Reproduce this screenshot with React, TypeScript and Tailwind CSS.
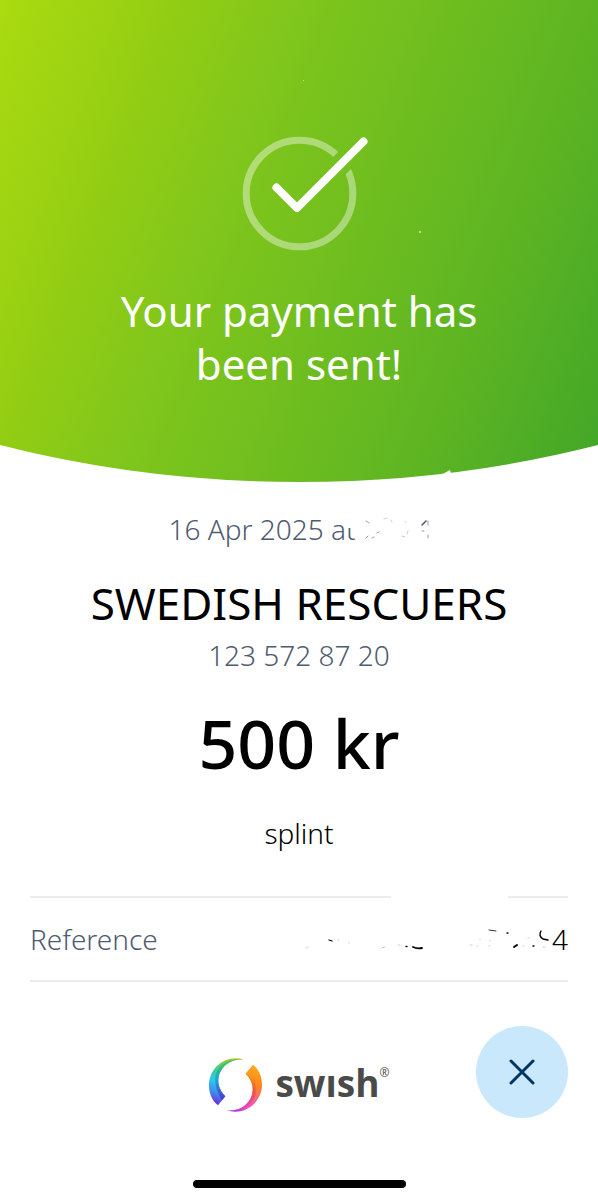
import { useState } from "react";

function CheckMark() {
  return (
    <svg width="140" height="116" viewBox="0 0 140 116" fill="none" aria-hidden="true">
      <mask id="ring-gap">
        <rect width="140" height="116" fill="#fff" />
        <path d="M68 72 L140 0" stroke="#000" strokeWidth="21" />
      </mask>
      <circle cx="70.5" cy="57.5" r="53.3" stroke="#fff" strokeOpacity="0.4" strokeWidth="7" mask="url(#ring-gap)" />
      <path d="M47.5 51.5 L68 72 L134.5 5.5" stroke="#fff" strokeWidth="8" strokeLinecap="round" strokeLinejoin="round" />
    </svg>
  );
}

function SwishMark() {
  return (
    <svg width="55" height="56" viewBox="0 0 165 168" aria-hidden="true">
      <defs>
        <linearGradient id="cool" x1="100" y1="0" x2="35" y2="145" gradientUnits="userSpaceOnUse">
          <stop offset="0" stopColor="#e6c41c" />
          <stop offset="0.2" stopColor="#8fc93a" />
          <stop offset="0.4" stopColor="#3fd08a" />
          <stop offset="0.62" stopColor="#2cc8ee" />
          <stop offset="0.82" stopColor="#3f8bee" />
          <stop offset="1" stopColor="#6a2be0" />
        </linearGradient>
        <linearGradient id="coolFold" x1="60" y1="20" x2="45" y2="135" gradientUnits="userSpaceOnUse">
          <stop offset="0" stopColor="#35c46a" />
          <stop offset="0.45" stopColor="#20a5d8" />
          <stop offset="1" stopColor="#5527c9" />
        </linearGradient>
        <linearGradient id="warm" x1="130" y1="23" x2="65" y2="168" gradientUnits="userSpaceOnUse">
          <stop offset="0" stopColor="#ffa91c" />
          <stop offset="0.3" stopColor="#f9861f" />
          <stop offset="0.55" stopColor="#f76a78" />
          <stop offset="0.78" stopColor="#f04fc4" />
          <stop offset="1" stopColor="#6b2be8" />
        </linearGradient>
        <linearGradient id="warmFold" x1="120" y1="33" x2="105" y2="148" gradientUnits="userSpaceOnUse">
          <stop offset="0" stopColor="#fbb51b" />
          <stop offset="0.5" stopColor="#f0602a" />
          <stop offset="1" stopColor="#e43bc4" />
        </linearGradient>
      </defs>
      <path d="M109 8 C55 -10 2 32 3 86 C3 110 13 131 30 145 L52 118 C34 100 26 77 34 52 C44 24 70 5 109 8 Z" fill="url(#cool)" />
      <path d="M109 8 C70 1 36 20 23 50 C18 82 27 104 42 130 L52 118 C34 100 26 77 34 52 C44 24 70 5 109 8 Z" fill="url(#coolFold)" />
      <path d="M56 160 C110 178 163 136 162 82 C162 58 152 37 135 23 L113 50 C131 68 139 91 131 116 C121 144 95 163 56 160 Z" fill="url(#warm)" />
      <path d="M56 160 C95 167 129 148 142 118 C147 86 138 64 123 38 L113 50 C131 68 139 91 131 116 C121 144 95 163 56 160 Z" fill="url(#warmFold)" />
    </svg>
  );
}

// leftovers of the erased time after the date
function TimeSmudge() {
  return (
    <svg width="86" height="24" viewBox="0 0 86 24" fill="none" stroke="#4f5b70" strokeLinecap="round" className="-ml-3" aria-hidden="true">
      <path d="M0 0 H20 V11 H0 Z" fill="#fff" stroke="none" />
      <path d="M22 4 L25 6 M22 21 L24 19 M28 21 L30 20 M33 16 L35 15" strokeWidth="1" opacity="0.6" />
      <path d="M40 2 L43 1 M47 3 L48 5 M58 19 L61 20 M63 17 L64 14 M61 5 L62 5" strokeWidth="1" opacity="0.3" />
      <path d="M78 8 L82 4" strokeWidth="1.6" />
      <path d="M84 4 V8 M84 18 V21 M78 14 H80" strokeWidth="1" opacity="0.6" />
    </svg>
  );
}

function ReferenceSmudge() {
  return (
    <svg width="248" height="24" viewBox="0 0 248 24" fill="none" stroke="#000" strokeLinecap="round" aria-hidden="true">
      <path d="M25 13 L28 14 M102 19.5 H103 M229 19 H230 M203 6 H204" strokeWidth="1.3" />
      <path d="M109 20 Q113 22 118 21" strokeWidth="1.8" />
      <path d="M185 3 L192 4" strokeWidth="0.8" />
      <path d="M210 20 L213 18" strokeWidth="2" />
      <path d="M237 4 Q234 9 239 12 L244 13" strokeWidth="1.4" />
      <path d="M34 13 H35 M45 15 V16 M2 21 L4 20 M78 21 L81 20 M94 18 H96 M166 18 H168 M173 19 H174 M176 12 V13 M186 13 V14 M185 19 H186 M219 19 H220 M239 20 H241 M224 11 H225" strokeWidth="1" opacity="0.2" />
    </svg>
  );
}

export default function App() {
  const [open, setOpen] = useState(true);

  if (!open) return null;

  return (
    <main className="flex min-h-screen flex-col bg-white font-['Noto_Sans',sans-serif] text-black">
      <header className="relative flex flex-col items-center bg-[linear-gradient(111deg,#abdb10_0%,#93cd13_22%,#80c61c_38%,#5eb522_76%,#42a628_100%)] px-8 pt-34 pb-[93px] text-white">
        <CheckMark />
        <h1 className="mt-8 max-w-96 text-center text-[42px] leading-[53px]">Your payment has been sent!</h1>
        <span className="absolute top-[80px] left-1/2 ml-1 size-px bg-white/60" />
        <span className="absolute top-[231px] left-[70%] size-0.5 rounded-full bg-white/70" />
        <svg viewBox="0 0 598 38" preserveAspectRatio="none" className="absolute inset-x-0 bottom-0 h-[38px] w-full" aria-hidden="true">
          <path d="M0 0 Q145 37 299 37 Q453 37 598 0 V38 H0 Z" fill="#fff" />
          <path d="M441 30 L450 25 L452 32 Z" fill="#fff" />
        </svg>
      </header>

      <section className="flex flex-col items-center px-8 pt-[26px] text-center">
        <p className="flex items-center text-[28px] leading-10 font-light text-[#4f5b70]">
          16 Apr 2025 at
          <TimeSmudge />
        </p>
        <h2 className="mt-[26px] text-[44px] leading-14">SWEDISH RESCUERS</h2>
        <p className="mt-1 text-[28px] leading-10 font-light text-[#4f5b70]">123 572 87 20</p>
        <p className="mt-7 text-[68px] leading-20 font-medium">500 kr</p>
        <p className="mt-[30px] text-[28px] leading-10 font-light">splint</p>
      </section>

      <section className="mt-[43px] px-[30px]">
        <div className="flex h-0.5">
          <span className="grow-361 bg-[#ececec]" />
          <span className="grow-117" />
          <span className="grow-60 bg-[#ececec]" />
        </div>
        <dl className="flex items-center justify-between border-b-2 border-[#e9edf0] py-[21px] text-[28px] leading-10 font-light">
          <dt className="text-[#4f5b70]">Reference</dt>
          <dd className="flex items-center">
            <ReferenceSmudge />4
          </dd>
        </dl>
      </section>

      <footer className="mt-auto flex flex-col items-center px-[30px] pb-3">
        <div className="grid w-full grid-cols-[1fr_auto_1fr] items-center">
          <div className="col-start-2 mt-[26px] flex items-center gap-3">
            <SwishMark />
            <span className="flex items-start pb-1 font-['Open_Sans',sans-serif] text-[#4a4a49]">
              <span className="text-[37px] leading-10 font-bold">swısh</span>
              <span className="text-xs leading-5">®</span>
            </span>
          </div>
          <button
            type="button"
            aria-label="Close"
            onClick={() => setOpen(false)}
            className="flex size-[92px] items-center justify-center justify-self-end rounded-full bg-[#c9e8fb]"
          >
            <svg width="26" height="26" viewBox="0 0 26 26" stroke="#003366" strokeWidth="3" strokeLinecap="round">
              <path d="M2 2 L24 24 M24 2 L2 24" />
            </svg>
          </button>
        </div>
        <div className="mt-[62px] h-2 w-[213px] rounded-full bg-black" />
      </footer>
    </main>
  );
}
